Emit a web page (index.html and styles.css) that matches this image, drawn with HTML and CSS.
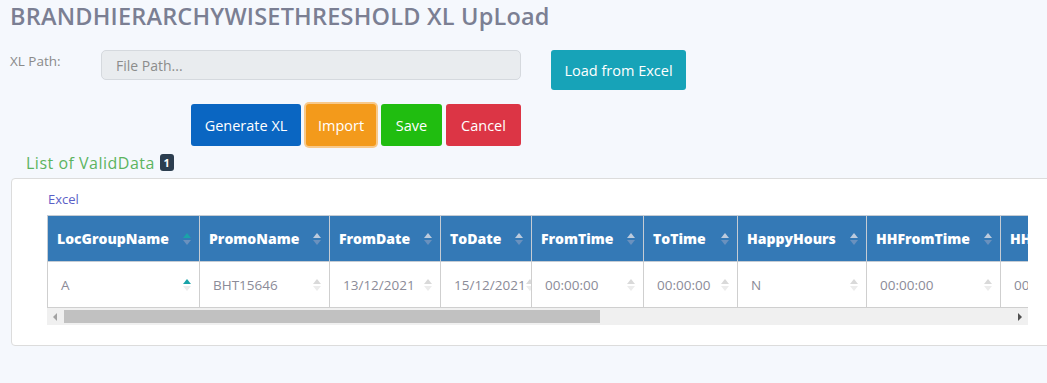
FILE: index.html
```html
<!DOCTYPE html>
<html lang="en">
<head>
  <meta charset="UTF-8" />
  <title>BRANDHIERARCHYWISETHRESHOLD XL UpLoad</title>
  <link rel="stylesheet" href="styles.css">
</head>
<body>

<div class="page">
  <h1 class="title">BRANDHIERARCHYWISETHRESHOLD XL UpLoad</h1>

  <div class="path-row">
    <label class="path-label">XL Path:</label>
    <input class="path-input" type="text" placeholder="File Path..." disabled>
    <button class="btn btn-load">Load from Excel</button>
  </div>

  <div class="action-row">
    <button class="btn btn-generate">Generate XL</button>
    <button class="btn btn-import">Import</button>
    <button class="btn btn-save">Save</button>
    <button class="btn btn-cancel">Cancel</button>
  </div>

  <div class="list-title">List of ValidData <span class="badge">1</span></div>

  <div class="card">
    <a class="excel-link">Excel</a>
    <div class="grid">
      <table>
        <colgroup>
          <col style="width:152px"><col style="width:130px"><col style="width:111px">
          <col style="width:91px"><col style="width:112px"><col style="width:94px">
          <col style="width:129px"><col style="width:134px"><col style="width:130px">
        </colgroup>
        <thead>
          <tr>
            <th><div class="cell">LocGroupName<span class="sort active"><i class="up"></i><i class="down"></i></span></div></th>
            <th><div class="cell">PromoName<span class="sort"><i class="up"></i><i class="down"></i></span></div></th>
            <th><div class="cell">FromDate<span class="sort"><i class="up"></i><i class="down"></i></span></div></th>
            <th><div class="cell">ToDate<span class="sort"><i class="up"></i><i class="down"></i></span></div></th>
            <th><div class="cell">FromTime<span class="sort"><i class="up"></i><i class="down"></i></span></div></th>
            <th><div class="cell">ToTime<span class="sort"><i class="up"></i><i class="down"></i></span></div></th>
            <th><div class="cell">HappyHours<span class="sort"><i class="up"></i><i class="down"></i></span></div></th>
            <th><div class="cell">HHFromTime<span class="sort"><i class="up"></i><i class="down"></i></span></div></th>
            <th><div class="cell">HHToTime<span class="sort"><i class="up"></i><i class="down"></i></span></div></th>
          </tr>
        </thead>
        <tbody>
          <tr>
            <td><div class="cell">A<span class="sort active"><i class="up"></i><i class="down"></i></span></div></td>
            <td><div class="cell">BHT15646<span class="sort"><i class="up"></i><i class="down"></i></span></div></td>
            <td><div class="cell">13/12/2021<span class="sort"><i class="up"></i><i class="down"></i></span></div></td>
            <td><div class="cell">15/12/2021<span class="sort"><i class="up"></i><i class="down"></i></span></div></td>
            <td><div class="cell">00:00:00<span class="sort"><i class="up"></i><i class="down"></i></span></div></td>
            <td><div class="cell">00:00:00<span class="sort"><i class="up"></i><i class="down"></i></span></div></td>
            <td><div class="cell">N<span class="sort"><i class="up"></i><i class="down"></i></span></div></td>
            <td><div class="cell">00:00:00<span class="sort"><i class="up"></i><i class="down"></i></span></div></td>
            <td><div class="cell">00:00:00<span class="sort"><i class="up"></i><i class="down"></i></span></div></td>
          </tr>
        </tbody>
      </table>
    </div>
    <div class="hscroll">
      <span class="arrow left"></span>
      <div class="track"><div class="thumb"></div></div>
      <span class="arrow right"></span>
    </div>
  </div>
</div>

</body>
</html>
```

FILE: styles.css
```css
html, body {
  margin: 0;
  overflow: hidden;
}

body {
  background: #f5f8fd;
  font-family: "Open Sans", Lato, sans-serif;
  color: #888;
}

.page {
  padding: 0 0 0 10px;
}

.title {
  margin: 0;
  padding-top: 1px;
  font-size: 23.5px;
  font-weight: 600;
  color: #7b7f93;
  line-height: 31px;
  letter-spacing: 0.2px;
}

.path-row {
  display: flex;
  align-items: flex-start;
  margin-top: 18px;
}

.path-label {
  width: 91px;
  font-size: 13.5px;
  color: #8a8a8a;
  padding-top: 2px;
  line-height: 18px;
}

.path-input {
  width: 420px;
  height: 30px;
  box-sizing: border-box;
  padding: 0 14px;
  border: 1px solid #d5d9de;
  border-radius: 5px;
  background: #e9ecef;
  font-family: inherit;
  font-size: 14px;
}

.path-input::placeholder {
  color: #8c8c8c;
}

.btn {
  border: none;
  border-radius: 3px;
  color: white;
  font-family: inherit;
  font-size: 14.5px;
  padding: 0;
  cursor: pointer;
}

.btn-load {
  margin-left: 30px;
  width: 135px;
  height: 40px;
  background: #17a3b8;
}

.action-row {
  display: flex;
  gap: 3px;
  margin-top: 14px;
  margin-left: 181px;
}

.action-row .btn {
  height: 42px;
}

.btn-generate {
  width: 110px;
  background: #0a66c2;
}

.btn-import {
  width: 70px;
  margin: 0 2px;
  background: #f39a1b;
  box-shadow: 0 0 0 2px #f8c98a;
}

.btn-save {
  width: 61px;
  background: #20bd10;
}

.btn-cancel {
  width: 75px;
  margin-left: 1px;
  background: #dc3545;
}

.list-title {
  margin: 8px 0 0 16px;
  font-size: 16px;
  letter-spacing: 0.5px;
  color: #5cb45f;
  line-height: 18px;
}

.badge {
  display: inline-block;
  width: 14px;
  height: 17px;
  line-height: 17px;
  text-align: center;
  vertical-align: top;
  border-radius: 3px;
  background: #2c3e50;
  color: white;
  font-size: 11px;
  font-weight: bold;
  letter-spacing: 0;
}

.card {
  margin-top: 6px;
  margin-left: 1px;
  width: 1080px;
  box-sizing: border-box;
  height: 168px;
  background: white;
  border: 1px solid #dcdcdc;
  border-radius: 4px;
  padding: 12px 0 0 35px;
}

.excel-link {
  display: block;
  font-size: 13px;
  line-height: 16px;
  color: #5b5fc7;
  margin-left: 1px;
}

.grid {
  margin-top: 8px;
  width: 981px;
  overflow: hidden;
}

table {
  border-collapse: collapse;
  table-layout: fixed;
  width: 1083px;
}

th, td {
  padding: 0;
  height: 45px;
  border: 1px solid #cfcfcf;
  text-align: left;
  white-space: nowrap;
  overflow: hidden;
}

th {
  background: #3479b6;
  color: white;
  font-size: 14px;
  font-weight: 800;
  border-color: #c5ccd4;
}

td {
  font-size: 13.5px;
  color: #8b8b98;
}

.cell {
  display: flex;
  justify-content: space-between;
  align-items: center;
  padding: 0 8px 0 9px;
}

td .cell {
  padding-left: 13px;
}

.sort {
  display: flex;
  flex-direction: column;
  gap: 2px;
  flex-shrink: 0;
}

.sort i {
  display: block;
  width: 0;
  height: 0;
  border-left: 4px solid transparent;
  border-right: 4px solid transparent;
}

.sort .up {
  border-bottom: 5px solid #bccbdd;
}

.sort .down {
  border-top: 5px solid #6a91be;
}

td .sort .up {
  border-bottom-color: #d9d9d9;
}

td .sort .down {
  border-top-color: #ececec;
}

.sort.active .up,
td .sort.active .up {
  border-bottom-color: #1aa3a8;
}

.hscroll {
  display: flex;
  align-items: center;
  width: 981px;
  height: 17px;
  background: #f0f0f0;
}

.arrow {
  width: 0;
  height: 0;
  border-top: 4px solid transparent;
  border-bottom: 4px solid transparent;
  margin: 0 6px;
}

.arrow.left {
  border-right: 4px solid #a3a3a3;
}

.arrow.right {
  border-left: 4px solid #505050;
}

.track {
  flex: 1;
  height: 13px;
}

.thumb {
  width: 536px;
  height: 13px;
  background: #c1c1c1;
  margin-left: 1px;
}
```
